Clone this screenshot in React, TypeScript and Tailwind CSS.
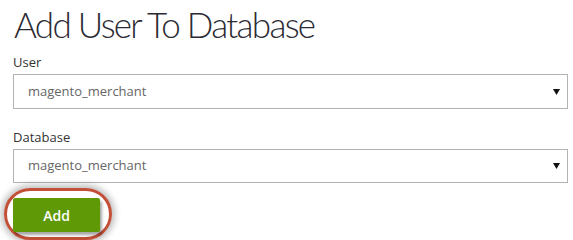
import React from 'react';

const fontStack = { fontFamily: '"Open Sans", "Liberation Sans", sans-serif' };

function SelectField({ label, value, height }: { label: string; value: string; height: string }) {
  return (
    <div className="flex flex-col">
      <label className="text-[13px] leading-[16px] text-[#333] mb-[4px]">{label}</label>
      <div className={`flex items-center justify-between ${height} border border-[#b3b3b3] bg-white pl-[14px] pr-[7px]`}>
        <span className="text-[13px] text-[#666]">{value}</span>
        <svg width="7" height="6" viewBox="0 0 7 6">
          <path d="M0 0 H7 L3.5 6 Z" fill="#111" />
        </svg>
      </div>
    </div>
  );
}

export default function App() {
  return (
    <div className="w-[573px] h-[240px] bg-white overflow-hidden px-[13px] text-[#333]" style={fontStack}>
      <h1
        className="text-[35px] font-light leading-[46px] h-[54px] text-[#2b2b33] pt-[1px] pl-[1px] tracking-[-1.7px]"
        style={{ fontFamily: 'Lato, "Open Sans", sans-serif' }}
      >
        Add User To Database
      </h1>
      <div className="flex flex-col gap-[20px] w-[555px]">
        <SelectField label="User" value="magento_merchant" height="h-[35px]" />
        <SelectField label="Database" value="magento_merchant" height="h-[34px]" />
      </div>
      <div className="relative mt-[15px] w-[87px] h-[34px]">
        <div className="absolute -left-[9px] -top-[10px] w-[108px] h-[52px] rounded-full border-[3px] border-[#c24f38] shadow-[0_0_6px_3px_rgba(0,0,0,0.25)]" />
        <button className="relative w-[87px] h-[34px] bg-[#5f9a06] text-white text-[14px] font-semibold rounded-[2px] shadow-[2px_3px_3px_rgba(0,0,0,0.35)]">
          Add
        </button>
      </div>
    </div>
  );
}
